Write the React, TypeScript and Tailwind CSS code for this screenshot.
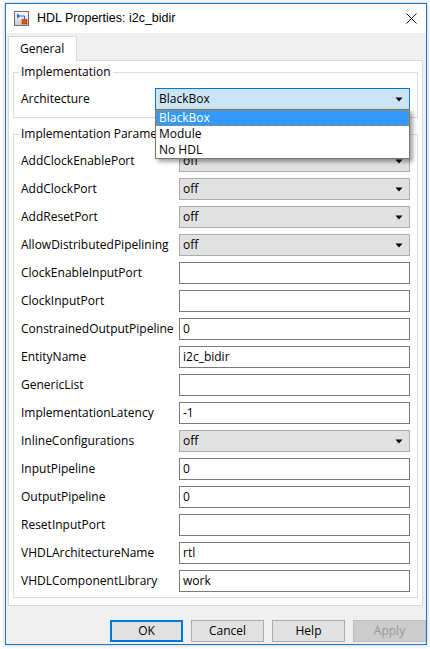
import React from 'react';

type Row = { label: string; kind: 'select' | 'text'; value: string };

const rows: Row[] = [
  { label: 'AddClockEnablePort', kind: 'select', value: 'off' },
  { label: 'AddClockPort', kind: 'select', value: 'off' },
  { label: 'AddResetPort', kind: 'select', value: 'off' },
  { label: 'AllowDistributedPipelining', kind: 'select', value: 'off' },
  { label: 'ClockEnableInputPort', kind: 'text', value: '' },
  { label: 'ClockInputPort', kind: 'text', value: '' },
  { label: 'ConstrainedOutputPipeline', kind: 'text', value: '0' },
  { label: 'EntityName', kind: 'text', value: 'i2c_bidir' },
  { label: 'GenericList', kind: 'text', value: '' },
  { label: 'ImplementationLatency', kind: 'text', value: '-1' },
  { label: 'InlineConfigurations', kind: 'select', value: 'off' },
  { label: 'InputPipeline', kind: 'text', value: '0' },
  { label: 'OutputPipeline', kind: 'text', value: '0' },
  { label: 'ResetInputPort', kind: 'text', value: '' },
  { label: 'VHDLArchitectureName', kind: 'text', value: 'rtl' },
  { label: 'VHDLComponentLibrary', kind: 'text', value: 'work' },
];

const Arrow = () => (
  <svg width="8" height="5" viewBox="0 0 8 5" className="shrink-0">
    <path d="M0.5 0.5 H7.5 L4 4.5 Z" fill="#000" />
  </svg>
);

const TitleIcon = () => (
  <svg width="15" height="15" viewBox="0 0 15 15">
    <defs>
      <linearGradient id="ig" x1="0" y1="0" x2="0" y2="1">
        <stop offset="0" stopColor="#ffffff" />
        <stop offset="1" stopColor="#c8c8c8" />
      </linearGradient>
    </defs>
    <rect x="0.5" y="0.5" width="14" height="14" fill="url(#ig)" stroke="#6d6d6d" />
    <path d="M3 2.5 L3 7.5 L7 5 Z" fill="#2a72cf" />
    <path d="M7 5 H10.5 V9" stroke="#2a72cf" strokeWidth="1" fill="none" />
    <rect x="8" y="8.5" width="5" height="4.5" fill="#e2531b" stroke="#b0360e" strokeWidth="0.6" />
  </svg>
);

const CloseIcon = () => (
  <svg width="11" height="11" viewBox="0 0 11 11">
    <path d="M0.5 0.5 L10.5 10.5 M10.5 0.5 L0.5 10.5" stroke="#111" strokeWidth="1" />
  </svg>
);

export default function App() {
  return (
    <div
      className="w-[430px] h-[649px] bg-white pt-[3px] pl-[5px] overflow-hidden text-[12px] text-black"
      style={{ fontFamily: '"Open Sans", "Noto Sans", sans-serif' }}
    >
      <div className="w-[422px] h-[642px] border border-[#1979ca] bg-[#f0f0f0] flex flex-col shadow-[0_0_4px_rgba(0,0,0,0.25)]">
        {/* title bar */}
        <div className="h-[29px] bg-white flex items-center pl-[8px] pr-[8px]">
          <TitleIcon />
          <span
            className="ml-[8px] text-[12.5px] leading-none"
            style={{ fontFamily: '"Liberation Sans", Arial, sans-serif' }}
          >
            HDL Properties: i2c_bidir
          </span>
          <div className="ml-auto mr-[1px] flex items-center">
            <CloseIcon />
          </div>
        </div>

        <div className="pl-[2px] pt-[3px] flex flex-col">
          {/* tab */}
          <div className="relative z-10 -mb-px w-[69px] h-[25px] border border-b-0 border-[#d9d9d9] bg-white flex items-center pl-[11px]">
            General
          </div>

          {/* panel */}
          <div className="w-[415px] border border-[#d9d9d9] bg-white px-[4px] pt-[3px] pb-[7px]">
            <fieldset className="border border-[#dcdcdc] px-[7px] pb-[7px]">
              <legend className="ml-[-2px] px-[2px] leading-[16px]">Implementation</legend>
              <div className="mt-[8px] flex items-center h-[22px]">
                <div className="w-[134px]">Architecture</div>
                <div className="relative flex-1 h-[22px]">
                  <div className="h-full border border-[#0078d7] bg-[#cce4f7] flex items-center pl-[3px] pr-[6px]">
                    <span className="flex-1">BlackBox</span>
                    <Arrow />
                  </div>
                  <div className="absolute left-0 top-[21px] w-[255px] z-20 border border-[#767676] bg-white shadow-[3px_3px_4px_rgba(0,0,0,0.35)]">
                    <div className="h-[16px] bg-[#3399ff] text-white border border-dotted border-[#c8884a] flex items-center pl-[2px]">
                      BlackBox
                    </div>
                    <div className="h-[16px] flex items-center pl-[3px]">Module</div>
                    <div className="h-[16px] flex items-center pl-[3px]">No HDL</div>
                  </div>
                </div>
              </div>
            </fieldset>

            <fieldset className="mt-[8px] border border-[#dcdcdc] px-[7px] pb-[5px]">
              <legend className="ml-[-2px] px-[2px] leading-[16px]">Implementation Parameters</legend>
              <div className="mt-[8px] flex flex-col gap-[6px]">
                {rows.map((r) => (
                  <div key={r.label} className="flex items-center h-[22px]">
                    <div className="w-[158px] whitespace-nowrap">{r.label}</div>
                    {r.kind === 'select' ? (
                      <div className="flex-1 h-full border border-[#adadad] bg-[#e1e1e1] flex items-center pl-[3px] pr-[6px]">
                        <span className="flex-1">{r.value}</span>
                        <Arrow />
                      </div>
                    ) : (
                      <div className="flex-1 h-full border border-[#7a7a7a] bg-white flex items-center pl-[3px]">
                        {r.value}
                      </div>
                    )}
                  </div>
                ))}
              </div>
            </fieldset>
          </div>

          {/* buttons */}
          <div className="mt-[14px] flex justify-end gap-[8px]">
            <button className="w-[73px] h-[22px] border-2 border-[#0078d7] bg-[#e1e1e1] flex items-center justify-center">
              OK
            </button>
            <button className="w-[73px] h-[22px] border border-[#adadad] bg-[#e1e1e1] flex items-center justify-center">
              Cancel
            </button>
            <button className="w-[73px] h-[22px] border border-[#adadad] bg-[#e1e1e1] flex items-center justify-center">
              Help
            </button>
            <button className="w-[73px] h-[22px] border border-[#bfbfbf] bg-[#cccccc] text-[#9a9a9a] flex items-center justify-center">
              Apply
            </button>
          </div>
        </div>
      </div>
    </div>
  );
}
